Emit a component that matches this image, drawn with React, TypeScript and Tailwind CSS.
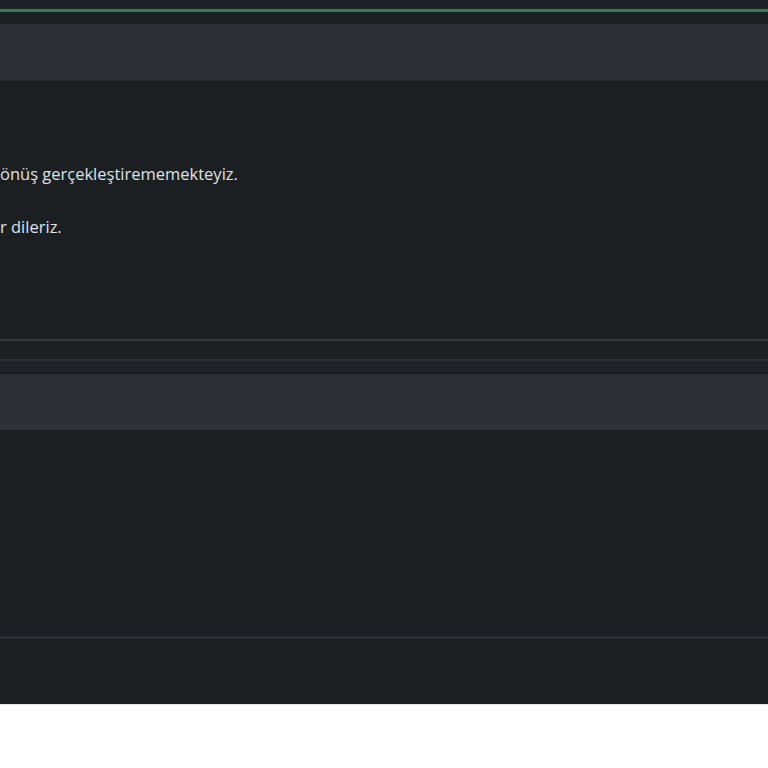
export default function App() {
  return (
    <div className="w-[768px] bg-white font-['Open_Sans','Noto_Sans',sans-serif]">
      <div className="bg-[#1c1f22]">
        {/* top strip */}
        <div className="h-[8px] bg-[#1f1f27]" />
        <div className="h-px bg-[#13281f]" />
        <div className="h-[3px] bg-[#3b7a59]" />
        <div className="h-[12px] bg-[#1c1f22]" />

        {/* first panel */}
        <div className="h-[56px] bg-[#2c3034]" />
        <div className="h-px bg-[#24282b]" />
        <div className="h-[258px] text-[16.5px] leading-[20px] text-[#dfe2e5]">
          <div className="pt-[83px]">
            <p>önüş gerçekleştirememekteyiz.</p>
            <p className="mt-[33px]">r dileriz.</p>
          </div>
        </div>
        <div className="h-[2px] bg-[#33373b]" />

        {/* separator area */}
        <div className="h-[12px] bg-[#1c1f22]" />
        <div className="h-px bg-[#202428]" />
        <div className="h-[5px] bg-[#1c1f22]" />
        <div className="h-[2px] bg-[#2c3034]" />
        <div className="h-[11px] bg-[#1e2125]" />
        <div className="h-[2px] bg-[#191c1f]" />

        {/* second panel */}
        <div className="h-[51px] bg-[#2c3034]" />
        <div className="h-[5px] bg-[#2f3337]" />
        <div className="h-[206px]" />
        <div className="h-[3px] bg-[#2a2e32]" />
        <div className="h-[65px]" />
      </div>
      <div className="h-px bg-[#e6e6e6]" />
      <div className="h-[63px]" />
    </div>
  );
}
